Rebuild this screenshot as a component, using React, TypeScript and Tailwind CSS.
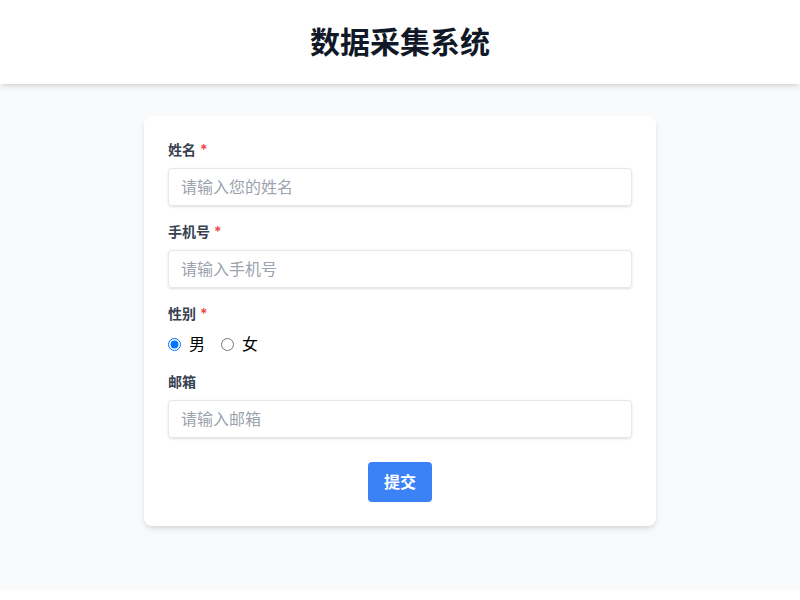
import React, { useState } from "react";

const FONT = { fontFamily: '"Inter", "Noto Sans CJK SC", sans-serif' };

const inputCls =
    "w-full px-3 py-1.5 text-base border border-[#e5e7eb] rounded shadow-sm placeholder:text-[#9ca3af] focus:outline-none";

function Field({ label, required, children }: { label: string; required?: boolean; children: React.ReactNode }) {
    return (
        <div>
            <label className="block text-sm font-semibold text-[#374151] mb-2">
                {label}
                {required && <span className="text-[#ef4444] ml-1">*</span>}
            </label>
            {children}
        </div>
    );
}

export default function App() {
    const [gender, setGender] = useState("male");

    return (
        <div style={FONT} className="bg-white">
            <header className="bg-white shadow-md py-6 relative z-10">
                <h1 className="text-3xl font-bold text-[#111827] text-center">数据采集系统</h1>
            </header>

            <main className="bg-[#f9fafb] pt-8 pb-16">
                <div className="max-w-lg mx-auto bg-white rounded-lg shadow-md p-6">
                    <form className="space-y-4" onSubmit={(e) => e.preventDefault()}>
                        <Field label="姓名" required>
                            <input type="text" placeholder="请输入您的姓名" className={inputCls} />
                        </Field>
                        <Field label="手机号" required>
                            <input type="tel" placeholder="请输入手机号" className={inputCls} />
                        </Field>
                        <Field label="性别" required>
                            <div className="flex items-center gap-4 text-base text-black">
                                <label className="flex items-center gap-2">
                                    <input
                                        type="radio"
                                        name="gender"
                                        checked={gender === "male"}
                                        onChange={() => setGender("male")}
                                    />
                                    男
                                </label>
                                <label className="flex items-center gap-2">
                                    <input
                                        type="radio"
                                        name="gender"
                                        checked={gender === "female"}
                                        onChange={() => setGender("female")}
                                    />
                                    女
                                </label>
                            </div>
                        </Field>
                        <Field label="邮箱">
                            <input type="email" placeholder="请输入邮箱" className={inputCls} />
                        </Field>
                        <div className="flex justify-center pt-2">
                            <button
                                type="submit"
                                className="px-4 py-2 bg-[#3b82f6] text-white font-semibold rounded hover:bg-[#2563eb]"
                            >
                                提交
                            </button>
                        </div>
                    </form>
                </div>
            </main>
        </div>
    );
}
